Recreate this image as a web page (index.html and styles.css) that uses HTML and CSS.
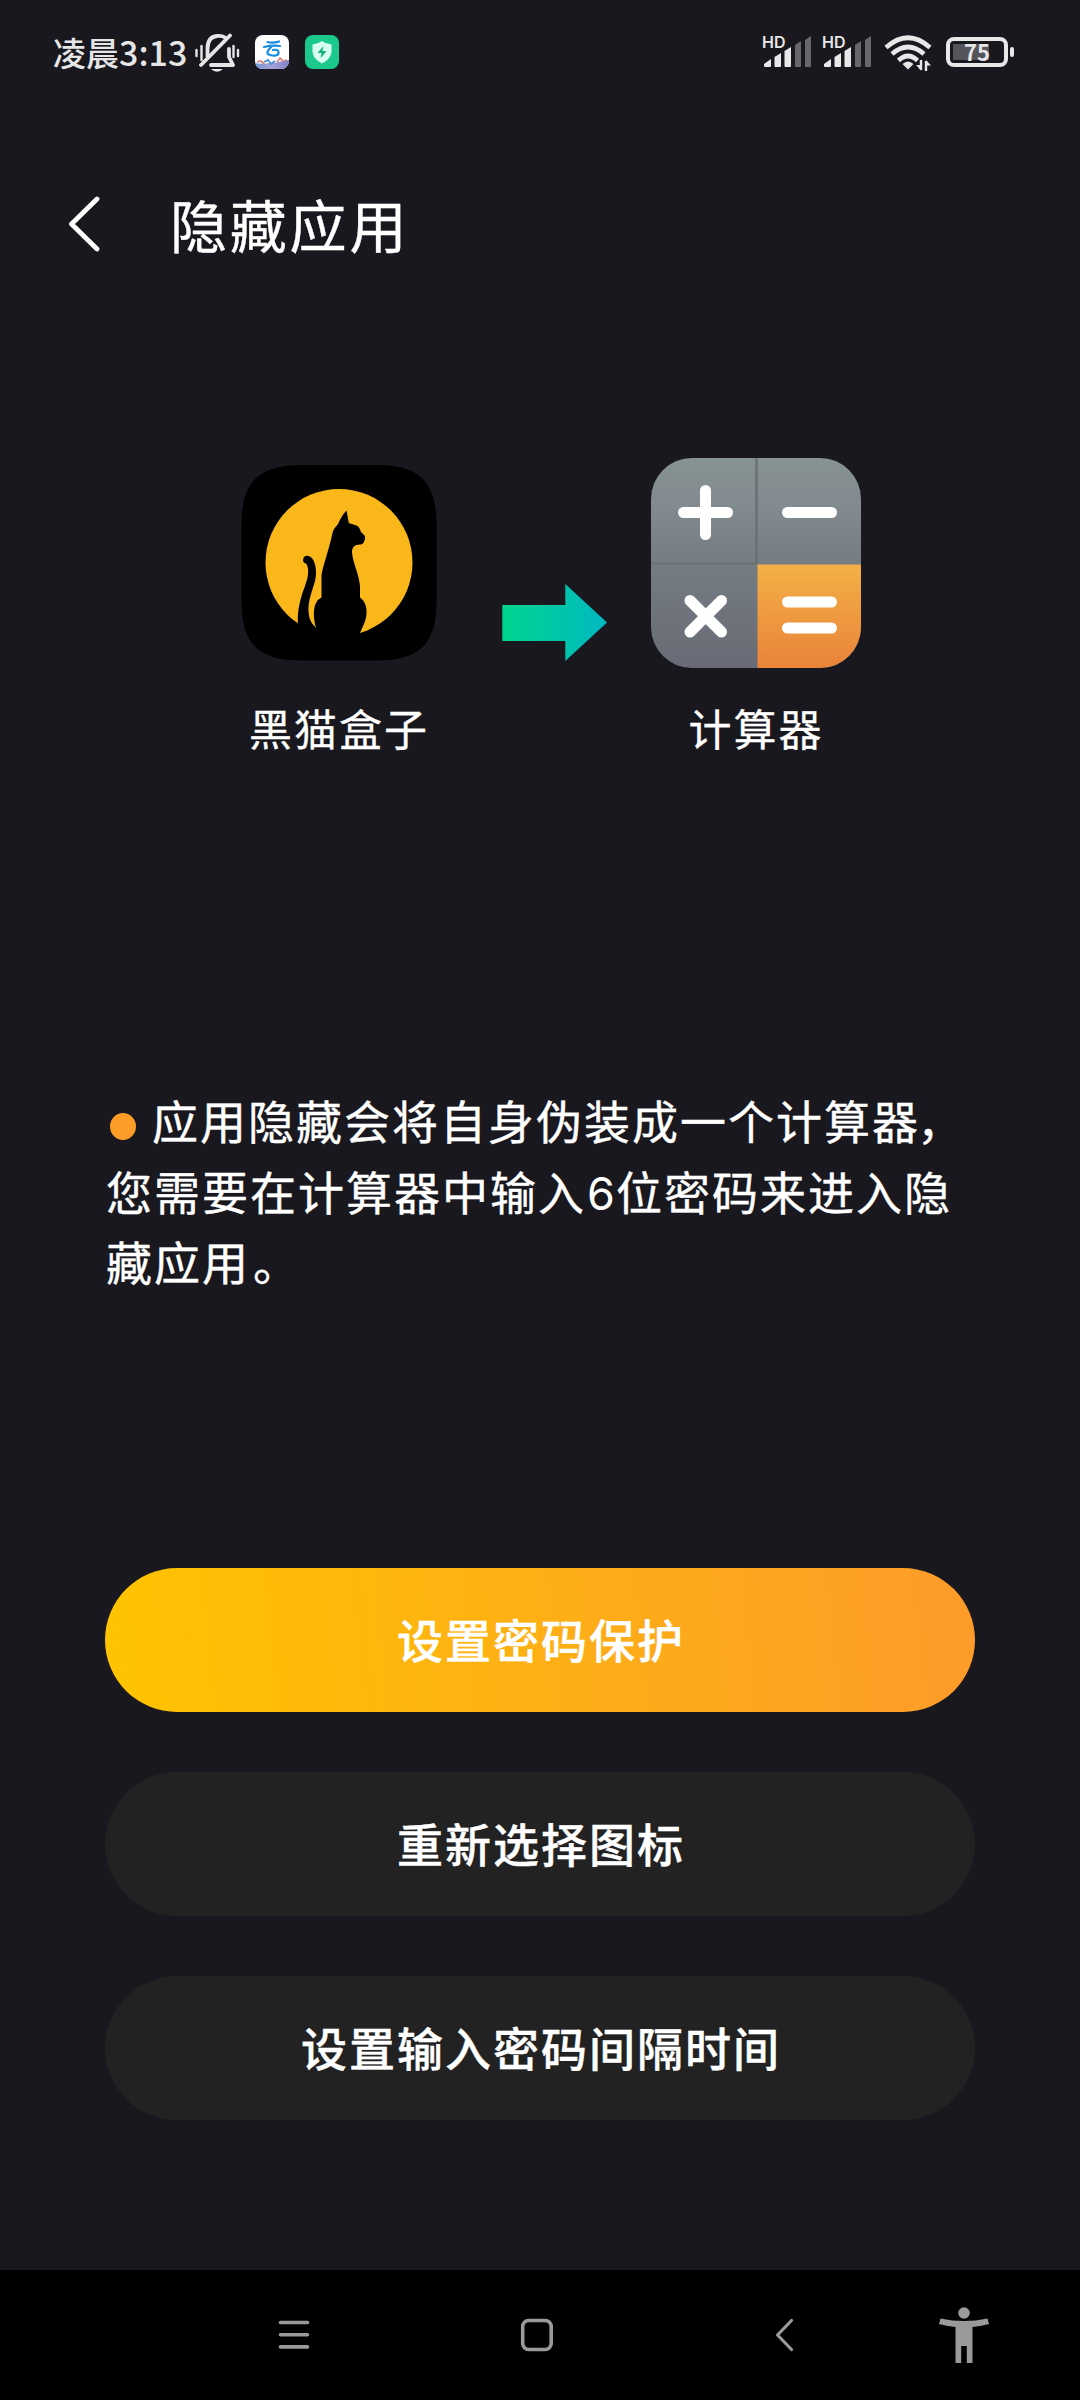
FILE: index.html
```html
<!DOCTYPE html>
<html lang="zh-CN">
<head>
<meta charset="utf-8">
<title>隐藏应用</title>
<link rel="stylesheet" href="styles.css">
</head>
<body>
<div class="screen">
  <div class="status">
    <span class="time">凌晨<span class="digits">3:13</span></span>
    <svg class="bell" width="46" height="40" viewBox="194 33 46 40" fill="none" stroke="#e6e6e6" stroke-width="3.800" stroke-linecap="round" stroke-linejoin="round">
      <path d="M207.500 57V49C207.500 41 211 36.500 217 36C221 35.700 223.500 36.500 225 37.500M230 35.500L201 65M229 49V57L233 65H211"/>
      <path d="M196.500 50V56M201.500 46V60M233.500 46V57M238 50V56" stroke-width="2.400"/>
      <path d="M211 69H223Q217 74.500 211 69Z" fill="#e6e6e6" stroke="none"/>
    </svg>
    <svg class="cloud" width="34" height="34" viewBox="0 0 34 34">
      <defs><linearGradient id="sky" x1="0" y1="0" x2="1" y2="0"><stop offset="0" stop-color="#719bd8"/><stop offset=".5" stop-color="#a7a2d5"/><stop offset="1" stop-color="#7d81cd"/></linearGradient></defs>
      <rect width="34" height="34" rx="8" fill="#fff"/>
      <path d="M0 28C8 30 24 27 34 25V26A8 8 0 0 1 26 34H8A8 8 0 0 1 0 28Z" fill="url(#sky)"/>
      <path d="M2 27L6 26L9 29M22 27L25 23L28 26L32 25" fill="none" stroke="#d98787" stroke-width="1.800"/>
      <path d="M9 27L13 25L16 29L20 26" fill="none" stroke="#4c8fd6" stroke-width="1.800"/>
      <path d="M12.500 7Q18 8.500 24 6.500M9 12Q17 10 25 11M17 11Q9 19 15 20Q24 22 23.500 17Q23 14 18 15" fill="none" stroke="#168be0" stroke-width="2.200" stroke-linecap="round"/>
    </svg>
    <svg class="shield" width="34" height="34" viewBox="0 0 34 34">
      <rect width="34" height="34" rx="8" fill="#1ac98b"/>
      <path d="M17 6Q21 9 26.500 9.500V17Q26 24 17 28.500Q8 24 7.500 17V9.500Q13 9 17 6Z" fill="#d9fff0"/>
      <path d="M18.500 11L12.500 18H16.500L15.500 23.500L21.500 16H17.500Z" fill="#16b47d"/>
    </svg>
    <div class="signal"><span class="hd">HD</span>
      <svg width="50" height="34" viewBox="0 0 50 34"><path d="M2 28L9 23V30Q9 31 8 31H3Q2 31 2 30ZM12.500 21L19 17V30Q19 31 18 31H13.500Q12.500 31 12.500 30ZM22.500 15L29 11V30Q29 31 28 31H23.500Q22.500 31 22.500 30Z" fill="#e8e8e8"/><path d="M33 9L39 5V30Q39 31 38 31H34Q33 31 33 30ZM43 4L49 0V30Q49 31 48 31H44Q43 31 43 30Z" fill="#68676c"/></svg>
    </div>
    <div class="signal"><span class="hd">HD</span>
      <svg width="50" height="34" viewBox="0 0 50 34"><path d="M2 28L9 23V30Q9 31 8 31H3Q2 31 2 30ZM12.500 21L19 17V30Q19 31 18 31H13.500Q12.500 31 12.500 30ZM22.500 15L29 11V30Q29 31 28 31H23.500Q22.500 31 22.500 30Z" fill="#e8e8e8"/><path d="M33 9L39 5V30Q39 31 38 31H34Q33 31 33 30ZM43 4L49 0V30Q49 31 48 31H44Q43 31 43 30Z" fill="#68676c"/></svg>
    </div>
    <svg class="wifi" width="48" height="38" viewBox="884 34 48 38" fill="none" stroke="#e8e8e8" stroke-width="4.600">
      <path d="M886 47.500Q908 28 930 47.500M892 54Q908 40 924 54M898.500 60.500Q908 51.500 917.500 60.500"/>
      <path d="M902.500 64Q908 59 913.500 64L908 69.500Z" fill="#e8e8e8" stroke="none"/>
      <path d="M921 60V70M926 61V71" stroke-width="2.400"/><path d="M921 70.500L916 65H921ZM926 60L931 65.500H926Z" fill="#e8e8e8" stroke="none"/>
    </svg>
    <div class="battery"><span>75</span></div>
  </div>

  <header class="header">
    <svg width="34" height="58" viewBox="67 194 34 58"><path d="M97 199L71.500 224L97 249" fill="none" stroke="#fff" stroke-width="4.800" stroke-linecap="round" stroke-linejoin="round"/></svg>
    <h1>隐藏应用</h1>
  </header>

  <section class="swap">
    <div class="app">
      <svg width="210" height="210" viewBox="234 458 210 210">
        <path d="M241.500 524C241.500 482 259 465 301 465H377C419 465 436.500 482 436.500 524V602C436.500 644 419 660.500 377 660.500H301C259 660.500 241.500 644 241.500 602Z" fill="#000"/>
        <circle cx="339" cy="562.500" r="73.500" fill="#fab71a"/>
        <path d="M346.500 510.500L348.800 523L355 525C359 526 360 529 361 532L365 536V539L363.500 543L361 544.500C355 544 352 547 352 552C352.500 562 359 574 360 586V597.500C365 601 367 607 366.500 614C366 622 362 627 359 636H319C314 626 312 610 316 603Q318 599 321.500 597.500V576C322 569 330 546 332 535C333.500 528 336 527 338 524Q342 515 346.500 510.500Z" fill="#000"/>
        <path d="M298 624C297 612 300 599 305 586C309 575 309 569 306.500 564Q301 562 304 557Q307 554 312 558C316 564 317 572 315 581C312 592 308 600 308.500 612Q309 625 321 631L316 638Z" fill="#000"/>
      </svg>
      <p>黑猫盒子</p>
    </div>
    <svg class="arrow" width="106" height="78" viewBox="0 0 106 78">
      <defs><linearGradient id="teal"><stop offset="0" stop-color="#00d58f"/><stop offset="1" stop-color="#00b8c0"/></linearGradient></defs>
      <path d="M0.300 21H63.300V0L105 38.500L63.300 77V57H0.300Z" fill="url(#teal)"/>
    </svg>
    <div class="app">
      <svg width="210" height="210" viewBox="0 0 210 210">
        <defs>
          <linearGradient id="gray" x1="0" y1="0" x2="0" y2="1"><stop offset="0" stop-color="#879292"/><stop offset=".22" stop-color="#828b90"/><stop offset=".5" stop-color="#757c82"/><stop offset="1" stop-color="#686b75"/></linearGradient>
          <linearGradient id="orange" x1="0" y1="0" x2="0" y2="1"><stop offset="0" stop-color="#f3b046"/><stop offset="1" stop-color="#e98339"/></linearGradient>
          <clipPath id="tile"><rect width="210" height="210" rx="41"/></clipPath>
        </defs>
        <g clip-path="url(#tile)">
          <rect width="210" height="210" fill="url(#gray)"/>
          <path d="M105.500 0V106M0 105.500H106" stroke="#697173" stroke-width="2.500"/>
          <rect x="106.500" y="106.500" width="104" height="104" fill="url(#orange)"/>
        </g>
        <path d="M32.500 54.500H76.500M54.500 32.500V76.500M136.500 54.500H180.500M136.500 144H180.500M136.500 170H180.500M39 142.500L70.500 174M70.500 142.500L39 174" stroke="#fff" stroke-width="11" stroke-linecap="round"/>
      </svg>
      <p>计算器</p>
    </div>
  </section>

  <p class="note"><i class="dot"></i>应用隐藏会将自身伪装成一个计算器<span class="comma">，</span><br>您需要在计算器中输入<span class="num">6</span>位密码来进入隐<br>藏应用<span class="stop">。</span></p>

  <div class="actions">
    <button class="btn primary">设置密码保护</button>
    <button class="btn">重新选择图标</button>
    <button class="btn">设置输入密码间隔时间</button>
  </div>

  <nav class="nav">
    <svg width="1080" height="130" viewBox="0 2270 1080 130" fill="none" stroke="#9a9a9a" stroke-width="3.600" stroke-linecap="round" stroke-linejoin="round">
      <path d="M280.500 2322.500H307.500M280.500 2334.700H307.500M280.500 2346.900H307.500"/>
      <rect x="522.700" y="2320.500" width="28.500" height="29" rx="6"/>
      <path d="M791.500 2320.500L777.500 2335L791.500 2349.500" stroke-width="3.200"/>
      <g fill="#9a9a9a" stroke="none"><circle cx="964" cy="2313" r="5.800"/><path d="M940.500 2318.500Q964 2323.500 987.500 2318.500L989 2324Q980 2326.500 972.500 2327V2363H966.800V2346H961.200V2363H955.500V2327Q948 2326.500 939 2324Z"/></g>
    </svg>
  </nav>
</div>
</body>
</html>
```
FILE: styles.css
```css
* { box-sizing: border-box; }
body, h1, p { margin: 0; }
body {
  background: #19181e;
  color: #fff;
  font-family: "Noto Sans CJK SC", sans-serif;
}
.screen {
  width: 1080px;
  height: 2400px;
  display: flex;
  flex-direction: column;
}
.status {
  height: 106px;
  padding-left: 53px;
  display: flex;
  align-items: center;
  color: #e6e6e6;
}
.time {
  width: 141px;
  font-size: 33px;
  font-weight: 500;
  line-height: 50px;
  padding-bottom: 3px;
  white-space: nowrap;
}
.digits { font-size: 34px; }
.cloud { margin: 0 16px 0 15px; }
.cloud, .shield { margin-top: -2px; }
.signal {
  position: relative;
  width: 50px;
  height: 34px;
  margin-right: 10px;
}
.shield + .signal { margin-left: 423px; }
.signal svg { display: block; }
.hd {
  position: absolute;
  left: 0;
  top: -2px;
  font: 600 16px/16px Inter, sans-serif;
}
.wifi { margin-left: 2px; }
.battery {
  position: relative;
  width: 62px;
  height: 30px;
  margin: -2px 0 0 14px;
  border: 4px solid #e8e8e8;
  border-radius: 8px;
  padding: 3px;
  background: linear-gradient(#55545a, #55545a) 3px 3px / 36px 16px no-repeat;
  font: 600 22px/15px "Noto Sans CJK SC", sans-serif;
  text-align: center;
}
.battery::after {
  content: "";
  position: absolute;
  right: -10px;
  top: 6px;
  width: 4px;
  height: 10px;
  border-radius: 2px;
  background: #e8e8e8;
}
.header {
  height: 234px;
  padding-left: 67px;
  display: flex;
  align-items: center;
}
.header h1 {
  margin-left: 69px;
  font-size: 57px;
  font-weight: 400;
  letter-spacing: 2.8px;
  -webkit-text-stroke: 0.4px #fff;
}
.swap {
  height: 744px;
  padding: 118px 0 0 234px;
  display: flex;
  align-items: flex-start;
}
.app { width: 210px; }
.app svg { display: block; }
.app p {
  margin-top: 29px;
  font-size: 43px;
  line-height: 60px;
  letter-spacing: 2px;
  text-align: center;
  -webkit-text-stroke: 0.3px #fff;
}
.arrow { margin: 126px 43px 0 58px; }
.note {
  height: 484px;
  padding-left: 106px;
  font-size: 46px;
  line-height: 70.700px;
  letter-spacing: 2px;
  white-space: nowrap;
  -webkit-text-stroke: 0.4px #fff;
}
.dot {
  display: inline-block;
  width: 26px;
  height: 27px;
  margin: 0 16px 0 4px;
  border-radius: 50%;
  background: #fd9d28;
  vertical-align: -1px;
}
.num {
  display: inline-block;
  width: 30px;
  line-height: 1;
  text-align: center;
  font-family: Inter, sans-serif;
  font-size: 45px;
  letter-spacing: 0;
  -webkit-text-stroke: 0;
}
.comma { margin-left: -3px; }
.stop { margin-left: 3px; }
.actions {
  height: 702px;
  padding: 0 105px;
  display: flex;
  flex-direction: column;
  gap: 60px;
}
.btn {
  height: 144px;
  padding: 0 0 4px 2px;
  border: 0;
  border-radius: 72px;
  background: #222;
  color: #fff;
  font: 500 46px/70px "Noto Sans CJK SC", sans-serif;
  letter-spacing: 2px;
  -webkit-text-stroke: 0.4px #fff;
}
.primary { background: linear-gradient(84deg, #fec400, #fd9b2a); }
.nav { height: 130px; background: #000; }
.nav svg { display: block; }
```
